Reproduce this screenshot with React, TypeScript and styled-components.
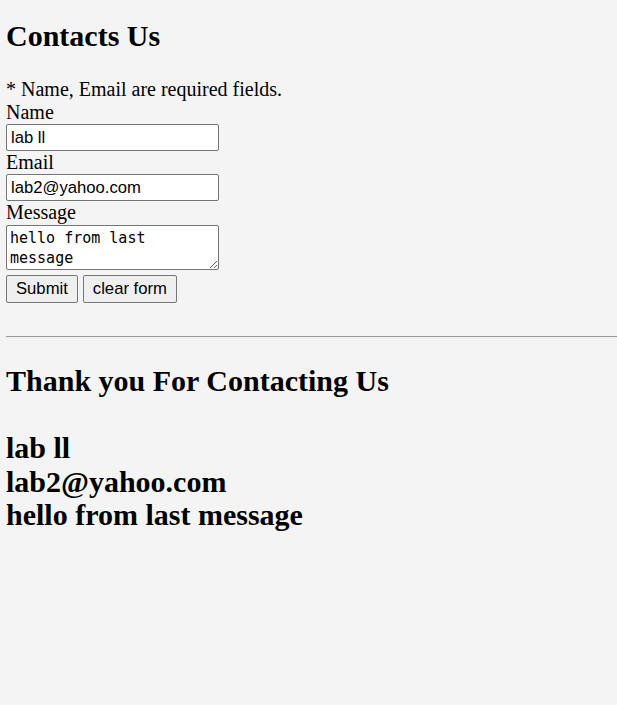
import styled, { createGlobalStyle } from "styled-components";

const GlobalStyle = createGlobalStyle`
  html, body {
    margin: 0;
    padding: 0;
    background: #f4f4f4;
  }
  body {
    padding: 0 0 0 6px;
    font-family: "Liberation Serif", "Times New Roman", serif;
    font-size: 20px;
    line-height: 23px;
    color: #000;
  }
`;

function App() {
  const contact = {
    name: "lab ll",
    email: "lab2@yahoo.com",
    message: "hello from last message",
  };
  return (
    <>
      <GlobalStyle />
      <Page>
        <Heading>Contacts Us</Heading>
        <ContactForm onSubmit={(e) => e.preventDefault()}>
          <Note>* Name, Email are required fields.</Note>
          <Label htmlFor="name">Name</Label>
          <TextInput id="name" defaultValue={contact.name} />
          <Label htmlFor="email">Email</Label>
          <TextInput id="email" defaultValue={contact.email} />
          <Label htmlFor="message">Message</Label>
          <MessageBox id="message" defaultValue={contact.message} />
          <ButtonRow>
            <Button type="submit">Submit</Button>
            <Button type="reset">clear form</Button>
          </ButtonRow>
        </ContactForm>
        <Divider />
        <Result>
          <Heading $top={26}>Thank you For Contacting Us</Heading>
          <ResultLines>
            <ResultLine>{contact.name}</ResultLine>
            <ResultLine>{contact.email}</ResultLine>
            <ResultLine>{contact.message}</ResultLine>
          </ResultLines>
        </Result>
      </Page>
    </>
  );
}
export default App;

const Page = styled.div`
  display: flex;
  flex-direction: column;
`;
const Heading = styled.h2<{ $top?: number }>`
  margin: ${(props) => props.$top ?? 19}px 0 0;
  font-size: 30px;
  font-weight: 700;
  line-height: 33px;
`;
const ContactForm = styled.form`
  display: flex;
  flex-direction: column;
  align-items: flex-start;
  margin-top: 26px;
`;
const Note = styled.p`
  margin: 0;
`;
const Label = styled.label`
  display: block;
`;
const TextInput = styled.input`
  box-sizing: border-box;
  width: 213px;
  height: 27px;
  margin: 0;
  padding: 0 4px;
  border: 1px solid #767676;
  border-radius: 2px;
  background: #fff;
  font-family: "Liberation Sans", Arial, sans-serif;
  font-size: 16.67px;
  color: #000;
`;
const MessageBox = styled.textarea`
  box-sizing: border-box;
  width: 213px;
  height: 45px;
  margin: 1px 0 0;
  padding: 3px 3px;
  border: 1px solid #767676;
  border-radius: 2px;
  background: #fff;
  font-family: "DejaVu Sans Mono", monospace;
  font-size: 15px;
  line-height: 19.5px;
  color: #000;
  overflow: hidden;
`;
const ButtonRow = styled.div`
  display: flex;
  gap: 5px;
  margin-top: 5px;
`;
const Button = styled.button`
  box-sizing: border-box;
  height: 28px;
  padding: 0 9px;
  border: 1px solid #767676;
  border-radius: 2px;
  background: #efefef;
  font-family: "Liberation Sans", Arial, sans-serif;
  font-size: 16.67px;
  color: #000;
`;
const Divider = styled.hr`
  margin: 33px 0 0;
  border: 0;
  border-top: 1px solid #9a9a9a;
  border-bottom: 1px solid #eeeeee;
`;
const Result = styled.section`
  display: flex;
  flex-direction: column;
`;
const ResultLines = styled.div`
  margin-top: 34px;
`;
const ResultLine = styled.h2`
  margin: 0;
  font-size: 30px;
  font-weight: 700;
  line-height: 33.5px;
`;
